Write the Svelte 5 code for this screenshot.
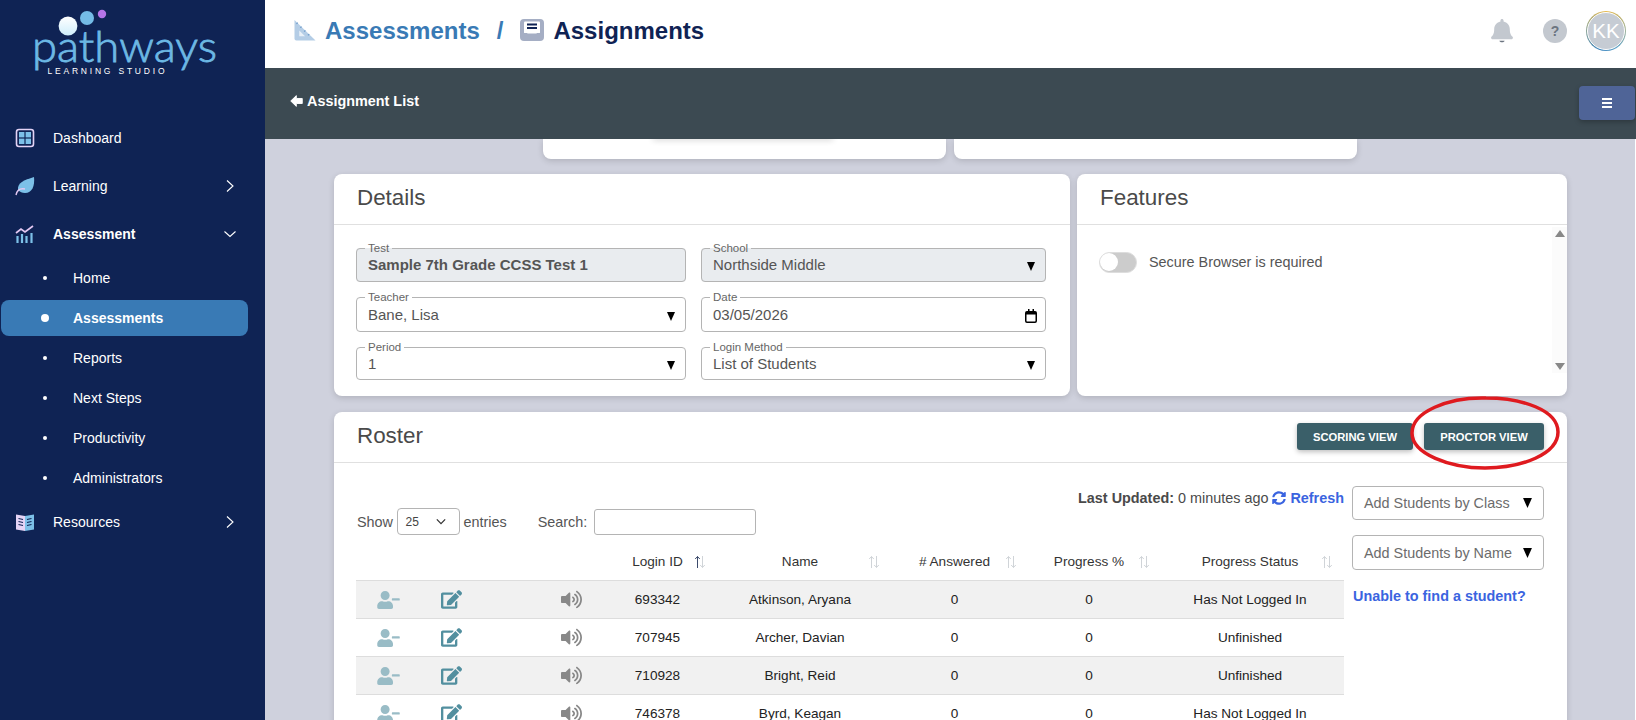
<script>
  const subs = ['Home', 'Assessments', 'Reports', 'Next Steps', 'Productivity', 'Administrators'];
  const rows = [
    ['693342', 'Atkinson, Aryana', '0', '0', 'Has Not Logged In'],
    ['707945', 'Archer, Davian', '0', '0', 'Unfinished'],
    ['710928', 'Bright, Reid', '0', '0', 'Unfinished'],
    ['746378', 'Byrd, Keagan', '0', '0', 'Has Not Logged In']
  ];
  const heads = ['Login ID', 'Name', '# Answered', 'Progress %', 'Progress Status'];
  const sortX = [84, 163, 110, 124, 157];
</script>

<div class="page">
  <aside class="side">
    <svg class="logo" viewBox="0 0 265 114" width="265" height="114">
      <defs>
        <linearGradient id="lg" x1="0" y1="0" x2="0" y2="1"><stop offset="0" stop-color="#fff" /><stop offset="1" stop-color="#cfeefb" /></linearGradient>
      </defs>
      <circle cx="68" cy="26" r="9.4" fill="url(#lg)" />
      <circle cx="87" cy="18" r="7" fill="#74bbe6" />
      <circle cx="102" cy="14" r="4.2" fill="#b574e8" />
      <text class="wm" x="32" y="62" textLength="185" lengthAdjust="spacingAndGlyphs">pathways</text>
      <text class="wm2" x="47.5" y="74" textLength="117">LEARNING STUDIO</text>
    </svg>

    <div class="nav"><svg class="ni" viewBox="0 0 20 20"><rect x="1.5" y="1.5" width="17" height="17" rx="2.5" fill="#0f2354" stroke="#e4d3f5" stroke-width="1.6" /><rect x="4" y="4" width="5.4" height="5.4" fill="#7cc0e8" /><rect x="10.6" y="4" width="5.4" height="5.4" fill="#7cc0e8" /><rect x="4" y="10.6" width="5.4" height="5.4" fill="#7cc0e8" /><rect x="10.6" y="10.6" width="5.4" height="5.4" fill="#7cc0e8" /></svg><span>Dashboard</span></div>
    <div class="nav"><svg class="ni" viewBox="0 0 20 20"><path d="M3 14C2 7 9 4 19 1c1 9-2 16-9 16-3 0-5-1-7-3z" fill="#7cc0e8" /><path d="M1 19c1-5 4-7 9-6" fill="none" stroke="#e4c8f2" stroke-width="1.4" /></svg><span>Learning</span><svg class="chev" viewBox="0 0 12 12"><path d="M3 .5 9 6l-6 5.500" fill="none" stroke="#fff" stroke-width="1.1" /></svg></div>
    <div class="nav strong"><svg class="ni" viewBox="0 0 20 20"><path d="M1 9l5-4 4 3 8-6" fill="none" stroke="#e4c8f2" stroke-width="1.700" /><path d="M2.500 12v7M7 10v9M11.500 12v7M16.500 9v10" stroke="#7cc0e8" stroke-width="2.200" /></svg><span>Assessment</span><svg class="chev" viewBox="0 0 12 12"><path d="M.5 3.500 6 8.500l5.500-5" fill="none" stroke="#fff" stroke-width="1.1" /></svg></div>
    {#each subs as s}
      <div class="sub" class:on={s === 'Assessments'}><i></i><span>{s}</span></div>
    {/each}
    <div class="nav"><svg class="ni" viewBox="0 0 20 20"><path d="M1 2.500 10 4v15l-9-1.500z" fill="#e4d3f5" /><path d="M19 2.500 10 4v15l9-1.500z" fill="#7cc0e8" /><path d="M3.500 6.500 8 7.500M3.500 9.500 8 10.500M3.500 12.500 8 13.500M12 7.500l4.500-1M12 10.500l4.500-1M12 13.500l4.500-1" stroke="#0f2354" stroke-width="1.100" /></svg><span>Resources</span><svg class="chev" viewBox="0 0 12 12"><path d="M3 .5 9 6l-6 5.500" fill="none" stroke="#fff" stroke-width="1.1" /></svg></div>
  </aside>

  <main class="main">
    <header class="top">
      <svg class="crumb-ic first" viewBox="0 0 24 23"><path d="M1 1 23 22.500H3a2 2 0 0 1-2-2z" fill="#b4cde6" /><path d="M6 12l6 6H6z" fill="#e8f0f8" /><path d="M3 5l1.500-1M7 9l1.500-1M11 13l1.500-1M15 17l1.500-1" stroke="#6f9ccb" stroke-width="1.200" /></svg>
      <span class="c1">Assessments</span>
      <span class="slash">/</span>
      <svg class="crumb-ic" viewBox="0 0 24 22"><rect x="0" y="0" width="24" height="22" rx="4" fill="#a5aec4" /><rect x="4" y="2.500" width="16" height="12" rx="1" fill="#fff" /><path d="M7 5.500h10M7 9h10" stroke="#0f2354" stroke-width="2" /><path d="M0 14h7l2 3h6l2-3h7v4H0z" fill="#a5aec4" /></svg>
      <span class="c2">Assignments</span>
      <div class="top-right">
        <svg class="bell" viewBox="0 0 448 512"><path fill="#c3c8cf" d="M439.390 362.290c-19.320-20.760-55.470-51.990-55.470-154.290 0-77.700-54.480-139.900-127.940-155.160V32c0-17.670-14.320-32-31.980-32s-31.980 14.330-31.980 32v20.840C118.560 68.100 64.080 130.300 64.080 208c0 102.300-36.150 133.530-55.470 154.290-6 6.450-8.660 14.160-8.610 21.710.11 16.400 12.980 32 32.100 32h383.800c19.120 0 32-15.600 32.100-32 .05-7.550-2.610-15.270-8.610-21.710z" /><path fill="#6b7480" d="M170 445h108c0 18-24 32-54 32s-54-14-54-32z" /></svg>
        <span class="help">?</span>
        <span class="avatar"><span>KK</span></span>
      </div>
    </header>
    <div class="bar">
      <a class="back"><svg viewBox="0 0 14 14"><path fill="#fff" stroke="#fff" stroke-linejoin="round" d="M.8 7 6.800 1.200V4.300H13.200V9.700H6.800V12.800z" /></svg>Assignment List</a>
      <button class="burger" aria-label="menu"><i></i><i></i><i></i></button>
    </div>

    <div class="content">
      <div class="stubs">
        <div class="stub"><div class="stub-in"></div></div>
        <div class="stub"></div>
      </div>

      <div class="two">
        <section class="card">
          <h2>Details</h2>
          <div class="fields">
            <fieldset class="ro"><legend>Test</legend><b class="val">Sample 7th Grade CCSS Test 1</b></fieldset>
            <fieldset class="ro"><legend>School</legend><span class="val">Northside Middle</span><svg class="tri" viewBox="0 0 8 9"><path d="M0 0h8L4 9z" /></svg></fieldset>
            <fieldset><legend>Teacher</legend><span class="val">Bane, Lisa</span><svg class="tri" viewBox="0 0 8 9"><path d="M0 0h8L4 9z" /></svg></fieldset>
            <fieldset><legend>Date</legend><span class="val">03/05/2026</span><svg class="cal" viewBox="0 0 12 14"><rect x=".75" y="2.750" width="10.500" height="10.500" rx="1.200" fill="none" stroke="#000" stroke-width="1.500" /><path d="M1 3h10v2.500H1zM3 0h1.500v3H3zM7.500 0H9v3H7.500z" /></svg></fieldset>
            <fieldset><legend>Period</legend><span class="val">1</span><svg class="tri" viewBox="0 0 8 9"><path d="M0 0h8L4 9z" /></svg></fieldset>
            <fieldset><legend>Login Method</legend><span class="val">List of Students</span><svg class="tri" viewBox="0 0 8 9"><path d="M0 0h8L4 9z" /></svg></fieldset>
          </div>
        </section>
        <section class="card">
          <h2>Features</h2>
          <div class="feat-body">
            <div class="toggle-row"><span class="toggle"><i></i></span><span class="tlabel">Secure Browser is required</span></div>
            <div class="sbar"><svg viewBox="0 0 10 7"><path d="M5 0l5 7H0z" /></svg><svg viewBox="0 0 10 7"><path d="M5 7 0 0h10z" /></svg></div>
          </div>
        </section>
      </div>

      <section class="card roster">
        <div class="r-head">
          <h2>Roster</h2>
          <div class="r-btns"><button class="btn">SCORING VIEW</button><button class="btn proc">PROCTOR VIEW</button></div>
        </div>
        <svg class="ring" viewBox="0 0 150 74" width="150" height="74"><path d="M76 2C38 1 2 16 2 37C2 58 40 72 75 72C112 72 148 58 148 36C148 14 112 2 76 2z" fill="none" stroke="#df1a1f" stroke-width="3.500" /></svg>
        <div class="r-body">
          <div class="r-main">
            <div class="updated"><b>Last Updated:</b> 0 minutes ago <svg viewBox="0 0 512 512"><path fill="#3a64e0" d="M370.720 133.280C339.458 104.008 298.888 87.962 255.848 88c-77.458.068-144.328 53.178-162.791 126.850-1.344 5.363-6.122 9.150-11.651 9.150H24.103c-7.498 0-13.194-6.807-11.807-14.176C33.933 94.924 134.813 8 256 8c66.448 0 126.791 26.136 171.315 68.685L463.030 40.970C478.149 25.851 504 36.559 504 57.941V192c0 13.255-10.745 24-24 24H345.941c-21.382 0-32.090-25.851-16.971-40.971l41.750-41.749zM32 296h134.059c21.382 0 32.090 25.851 16.971 40.971l-41.750 41.750c31.262 29.273 71.835 45.319 114.876 45.280 77.418-.07 144.315-53.144 162.787-126.849 1.344-5.363 6.122-9.150 11.651-9.150h57.304c7.498 0 13.194 6.807 11.807 14.176C478.067 417.076 377.187 504 256 504c-66.448 0-126.791-26.136-171.315-68.685L48.970 471.030C33.851 486.149 8 475.441 8 454.059V320c0-13.255 10.745-24 24-24z" /></svg> <b class="link">Refresh</b></div>
            <div class="filters">
              <span>Show</span>
              <span class="len">25<svg viewBox="0 0 12 8"><path d="M1 1.500l5 5 5-5" fill="none" stroke="#333" stroke-width="1.500" /></svg></span>
              <span>entries</span>
              <span class="slabel">Search:</span>
              <span class="search"></span>
            </div>
            <table>
              <colgroup><col class="w1" /><col class="w2" /><col class="w3" /><col class="w4" /><col class="w5" /><col class="w6" /><col class="w7" /><col class="w8" /></colgroup>
              <thead>
                <tr>
                  <th></th><th></th><th></th>
                  {#each heads as h, i}
                    <th class:lastc={i === 4}>{h}<svg class="sort" class:act={i === 0} viewBox="0 0 12 14" style="left:{sortX[i]}px"><path class="u" d="M3.500 13V1.500M1.200 4 3.500 1.500 5.800 4" /><path class="d" d="M8.500 1v11.500M6.200 10l2.300 2.500 2.300-2.500" /></svg></th>
                  {/each}
                </tr>
              </thead>
              <tbody>
                {#each rows as r}
                  <tr>
                    <td><svg class="um" viewBox="0 0 640 512"><path fill="#99bcc6" d="M624 208H432c-8.800 0-16 7.200-16 16v32c0 8.800 7.200 16 16 16h192c8.800 0 16-7.200 16-16v-32c0-8.800-7.200-16-16-16zm-400 48c70.700 0 128-57.300 128-128S294.700 0 224 0 96 57.300 96 128s57.300 128 128 128zm89.600 32h-16.700c-22.200 10.200-46.900 16-72.900 16s-50.600-5.800-72.900-16h-16.700C60.200 288 0 348.200 0 422.400V464c0 26.500 21.500 48 48 48h352c26.500 0 48-21.500 48-48v-41.600c0-74.200-60.200-134.400-134.400-134.400z" /></svg></td>
                    <td><svg class="ed" viewBox="0 0 576 512"><path fill="#528f9f" d="M402.600 83.200l90.200 90.200c3.800 3.800 3.800 10 0 13.800L274.400 405.600l-92.800 10.300c-12.400 1.400-22.900-9.100-21.500-21.500l10.300-92.800L388.800 83.200c3.800-3.800 10-3.800 13.800 0zm162-22.900l-48.800-48.800c-15.200-15.200-39.900-15.200-55.200 0l-35.400 35.400c-3.800 3.800-3.800 10 0 13.800l90.200 90.200c3.800 3.800 10 3.800 13.800 0l35.400-35.400c15.200-15.300 15.200-40 0-55.200zM384 346.200V448H64V128h229.800c3.200 0 6.200-1.300 8.500-3.500l40-40c7.600-7.600 2.200-20.500-8.500-20.500H48C21.500 64 0 85.500 0 112v352c0 26.500 21.500 48 48 48h352c26.500 0 48-21.500 48-48V306.200c0-10.700-12.900-16-20.500-8.500l-40 40c-2.200 2.300-3.500 5.300-3.500 8.500z" /></svg></td>
                    <td class="spk"><svg class="vol" viewBox="0 0 576 512"><path fill="#888" d="M215.030 71.050L126.060 160H24c-13.260 0-24 10.740-24 24v144c0 13.250 10.740 24 24 24h102.060l88.970 88.950c15.030 15.030 40.970 4.470 40.970-16.970V88.020c0-21.460-25.960-32-40.970-16.970zm233.320-51.080c-11.170-7.330-26.180-4.240-33.510 6.950-7.340 11.170-4.220 26.180 6.950 33.510 66.270 43.490 105.820 116.600 105.820 195.580 0 78.980-39.550 152.090-105.820 195.580-11.170 7.320-14.290 22.340-6.950 33.500 7.040 10.710 21.930 14.560 33.510 6.950C528.270 439.580 576 351.330 576 256S528.270 72.430 448.350 19.970zM480 256c0-63.530-32.060-121.940-85.770-156.240-11.190-7.140-26.030-3.820-33.120 7.460s-3.780 26.210 7.410 33.360C408.270 165.970 432 209.110 432 256s-23.730 90.030-63.480 115.420c-11.190 7.140-14.500 22.070-7.410 33.360 6.510 10.360 21.120 15.140 33.120 7.460C447.940 377.940 480 319.540 480 256zm-141.770-76.870c-11.580-6.330-26.190-2.160-32.610 9.450-6.390 11.610-2.160 26.200 9.450 32.610C327.980 228.280 336 241.630 336 256c0 14.380-8.020 27.720-20.920 34.810-11.610 6.410-15.840 21-9.450 32.610 6.430 11.660 21.050 15.800 32.610 9.450 28.230-15.550 45.770-45 45.770-76.880s-17.540-61.320-45.780-76.860z" /></svg></td>
                    {#each r as c, i}<td class:lastc={i === 4}>{c}</td>{/each}
                  </tr>
                {/each}
              </tbody>
            </table>
          </div>
          <div class="r-side">
            <div class="add">Add Students by Class<svg class="tri" viewBox="0 0 8 9"><path d="M0 0h8L4 9z" /></svg></div>
            <div class="add">Add Students by Name<svg class="tri" viewBox="0 0 8 9"><path d="M0 0h8L4 9z" /></svg></div>
            <a class="link unable">Unable to find a student?</a>
          </div>
        </div>
      </section>
    </div>
  </main>
</div>

<style>
  :global(body) { margin: 0; background: #fff; overflow: hidden; }
  .page { display: flex; width: 1636px; height: 720px; overflow: hidden; font-family: "Liberation Sans", Arial, sans-serif; font-size: 13.6px; color: #212529; }

  .side { width: 265px; flex: none; background: #0f2354; color: #fff; font-size: 14px; }
  .logo { display: block; }
  .wm { font-family: Lato, "Open Sans", sans-serif; font-weight: 300; font-size: 43px; fill: #6cb8e4; stroke: #6cb8e4; stroke-width: .8px; }
  .wm2 { font-family: "Liberation Sans", sans-serif; font-size: 8.500px; fill: #fff; }
  .nav { height: 48px; display: flex; align-items: center; padding-left: 15px; padding-right: 29px; }
  .nav span { margin-left: 18px; flex: 1; }
  .ni { width: 20px; height: 20px; flex: none; }
  .chev { width: 12px; height: 12px; flex: none; }
  .strong { font-weight: 700; }
  .sub { height: 40px; display: flex; align-items: center; padding-left: 43px; box-sizing: border-box; }
  .sub i { width: 4px; height: 4px; border-radius: 50%; background: #fff; margin-right: 26px; flex: none; }
  .sub.on { height: 36px; margin: 2px 17px 2px 1px; padding-left: 40px; background: #397ab5; border-radius: 8px; font-weight: 700; }
  .sub.on i { width: 8px; height: 8px; margin-right: 24px; }

  .main { flex: 1; min-width: 0; display: flex; flex-direction: column; }
  .top { height: 68px; flex: none; box-sizing: border-box; padding: 0 0 6px 28px; display: flex; align-items: center; background: #fff; font-size: 24px; font-weight: 700; }
  .crumb-ic { width: 24px; height: 22px; margin-top: -2px; }
  .crumb-ic.first { margin-right: 8px; }
  .c1 { color: #397ab5; }
  .slash { color: #397ab5; margin: 0 17px 0 17px; }
  .c2 { color: #0f2354; margin-left: 9px; }
  .top-right { margin-left: auto; display: flex; align-items: center; padding-right: 10px; }
  .bell { width: 22px; height: 25px; margin-right: 30px; }
  .help { width: 24px; height: 24px; border-radius: 50%; background: #c3c8cf; color: #6b7480; font-size: 14px; text-align: center; line-height: 24px; margin-right: 19px; }
  .avatar { width: 40px; height: 40px; box-sizing: border-box; padding: 1px; border-radius: 50%; background: conic-gradient(#e8b94a, #6aa8c8 40%, #3e86c0 55%, #9aa88a 80%, #e8b94a); display: block; }
  .avatar span { display: block; height: 38px; border: 1px solid #fff; box-sizing: border-box; border-radius: 50%; background: #c6ccd4; color: #fff; font-size: 20.500px; font-weight: 400; line-height: 36px; text-align: center; }

  .bar { height: 71px; flex: none; background: #3c4a52; display: flex; align-items: flex-start; justify-content: space-between; padding: 18px 1px 0 25px; box-sizing: border-box; }
  .back { color: #fff; font-weight: 700; font-size: 14.400px; display: flex; align-items: center; height: 30px; }
  .back svg { width: 13px; height: 14px; margin-right: 4px; }
  .burger { width: 56px; height: 34px; background: #4f6497; border: 0; border-radius: 4px; display: flex; flex-direction: column; align-items: center; justify-content: center; gap: 2px; box-shadow: 0 2px 5px rgba(0,0,0,.25); padding: 0; }
  .burger i { display: block; width: 10px; height: 2px; background: #fff; }

  .content { flex: 1; margin-right: 1px; background: #cfd1dd; padding: 0 68px 0 69px; min-height: 0; overflow: hidden; }
  .stubs { display: flex; gap: 8px; padding-left: 209px; }
  .stub { width: 403px; height: 20px; background: #fff; border-radius: 0 0 8px 8px; box-shadow: 0 2px 6px rgba(0,0,0,.15); overflow: hidden; }
  .stub-in { width: 180px; height: 4px; margin: -4px 0 0 110px; box-shadow: 0 1px 6px rgba(0,0,0,.2); }

  .two { display: grid; grid-template-columns: 736px 490px; gap: 7px; margin-top: 15px; }
  .card { background: #fff; border-radius: 8px; box-shadow: 0 2px 6px rgba(0,0,0,.15); }
  .two .card { height: 222px; }
  h2 { margin: 0; height: 51px; box-sizing: border-box; border-bottom: 1px solid #e0e0e0; padding-left: 23px; font-weight: 400; font-size: 22.400px; line-height: 48px; color: #4a4a4a; }

  .fields { display: grid; grid-template-columns: 330px 345px; column-gap: 15px; row-gap: 9px; padding: 17px 0 0 22px; }
  fieldset { margin: 0; padding: 0 11px; min-width: 0; border: 1px solid #b4b4b4; border-radius: 4px; height: 40px; box-sizing: border-box; display: flex; align-items: center; justify-content: space-between; color: #555; font-size: 15px; }
  fieldset:nth-child(3), fieldset:nth-child(4) { height: 41px; }
  fieldset:nth-child(5), fieldset:nth-child(6) { height: 39px; }
  legend { font-size: 11.500px; line-height: 12px; padding: 0 3px; margin-left: -3px; color: #666; }
  .ro { background: #e9ecef; }
  .val { margin-top: -6px; }
  .tri { width: 8px; height: 9px; flex: none; margin: -2px -1px 0 0; }
  .cal { width: 12px; height: 14px; flex: none; margin: -3px -3px 0 0; }

  .feat-body { display: flex; justify-content: space-between; height: 171px; position: relative; }
  .toggle-row { display: flex; align-items: center; padding: 26px 0 0 22px; height: 22px; }
  .toggle { width: 38px; height: 21px; box-sizing: border-box; background: #ccc; border: 1.500px solid #ddd; border-radius: 11px; display: block; flex: none; }
  .toggle i { display: block; width: 18px; height: 18px; background: #fff; border-radius: 50%; }
  .tlabel { margin-left: 12px; font-size: 14.400px; color: #555; }
  .sbar { width: 15px; background: #fbfbfb; height: 146px; display: flex; flex-direction: column; justify-content: space-between; align-items: center; padding: 3px 0; box-sizing: border-box; margin-top: 2px; }
  .sbar svg { width: 10px; height: 7px; fill: #888; }

  .roster { margin-top: 16px; height: 400px; position: relative; }
  .r-head { position: relative; }
  .r-btns { position: absolute; right: 23px; top: 11px; display: flex; gap: 11px; }
  .btn { height: 27px; width: 116px; border: 0; border-radius: 3px; background: #3a5f69; color: #fff; font-family: "Liberation Sans", sans-serif; font-weight: 700; font-size: 11.200px; box-shadow: 0 2px 5px rgba(0,0,0,.25); padding: 0; }
  .btn.proc { width: 120px; }
  .ring { position: absolute; left: 1076px; top: -16px; pointer-events: none; }

  .r-body { display: flex; padding-left: 22px; }
  .r-main { width: 988px; }
  .updated { text-align: right; line-height: 18px; padding-top: 26px; height: 19px; color: #4a4a4a; white-space: nowrap; font-size: 14.400px; }
  .updated svg { width: 14px; height: 14px; vertical-align: -2px; }
  .link { color: #3a64e0; font-weight: 700; }
  .filters { display: flex; align-items: center; height: 27px; color: #555; padding-left: 1px; font-size: 14.400px; }
  .len { width: 63px; height: 27px; box-sizing: border-box; border: 1px solid #b4b4b4; border-radius: 4px; margin: 0 4px 0 3.500px; display: flex; align-items: center; justify-content: space-between; padding: 0 13px 0 8px; font-size: 12px; color: #444; }
  .len svg { width: 10px; height: 7px; }
  .slabel { margin-left: 31px; }
  .search { width: 162px; height: 26px; box-sizing: border-box; border: 1px solid #b4b4b4; border-radius: 3px; margin-left: 6.500px; }

  table { width: 988px; table-layout: fixed; border-collapse: collapse; margin-top: 8px; }
  .w1 { width: 64px; } .w2 { width: 62px; } .w3 { width: 128px; } .w4 { width: 95px; } .w5 { width: 190px; } .w6 { width: 119px; } .w7 { width: 150px; } .w8 { width: 180px; }
  th { height: 37px; padding: 0; font-weight: 400; text-align: center; position: relative; border-bottom: 1px solid #ddd; color: #333; }
  td { height: 37px; padding: 0; text-align: center; border-bottom: 1px solid #ddd; color: #222; }
  tbody tr:nth-child(odd) td { background: #f1f1f1; }
  .lastc { padding-right: 8px; }
  .spk { padding-left: 50px; }
  .sort { position: absolute; top: 12px; width: 12px; height: 14px; stroke: #d0d4d8; fill: none; stroke-width: 1; }
  .sort.act .u { stroke: #3b4a6b; }
  svg.um { width: 23px; height: 18px; display: block; margin: auto; }
  svg.ed { width: 21px; height: 19px; display: block; margin: auto; }
  svg.vol { width: 21px; height: 19px; display: block; margin: auto; }

  .r-side { margin-left: 8px; width: 192px; padding-top: 23px; }
  .add { height: 34px; box-sizing: border-box; border: 1px solid #b4b4b4; border-radius: 4px; display: flex; align-items: center; justify-content: space-between; padding: 0 11px; margin-bottom: 15px; color: #6c6c6c; font-size: 14.400px; white-space: nowrap; }
  .add:nth-child(2) { height: 35px; margin-bottom: 0; }
  .add .tri { margin: 0; width: 9px; height: 10px; }
  .unable { display: block; margin: 18px 0 0 1px; font-size: 14.400px; line-height: 16px; }
</style>
